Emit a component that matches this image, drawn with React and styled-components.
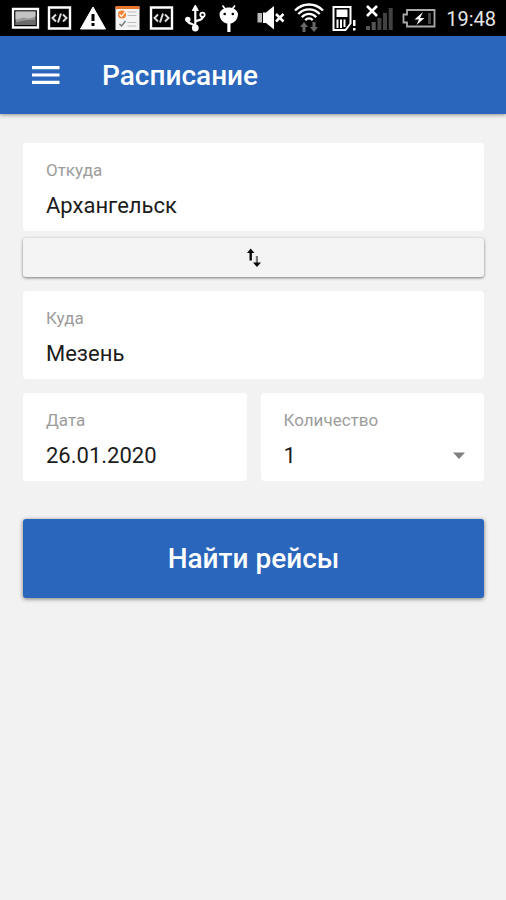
import React, { useState } from 'react';
import styled, { createGlobalStyle } from 'styled-components';

const GlobalStyle = createGlobalStyle`
  * {
    box-sizing: border-box;
  }

  body {
    margin: 0;
    background: #f2f2f2;
    font-family: Roboto, sans-serif;
  }
`;

const App = () => {
  const [from, setFrom] = useState('Архангельск');
  const [to, setTo] = useState('Мезень');
  const [date, setDate] = useState('26.01.2020');
  const [count, setCount] = useState('1');

  const swap = () => {
    setFrom(to);
    setTo(from);
  };

  return (
    <>
      <GlobalStyle />
      <StatusBar />
      <Header>
        <MenuButton type="button" aria-label="Меню">
          <svg width="28" height="20" viewBox="0 0 28 20" fill="#fff">
            <path d="M0 1h27.500v3.200H0zM0 8.400h27.500v3.200H0zM0 15.800h27.500V19H0z" />
          </svg>
        </MenuButton>
        <Title>Расписание</Title>
      </Header>
      <Form onSubmit={e => e.preventDefault()}>
        <Field>
          <Label htmlFor="from">Откуда</Label>
          <Input id="from" value={from} onChange={e => setFrom(e.target.value)} />
        </Field>
        <SwapButton type="button" aria-label="Поменять местами" onClick={swap}>
          <svg width="16" height="20" viewBox="0 0 16 20">
            <path d="M4.700 0.500L1 5h2.500v7.500h2.400V5h2.600z" fill="#0a0a0a" />
            <path d="M9.800 8h2.200v7H9.800z" fill="#777" />
            <path d="M7 14.500h8L11 19z" fill="#0a0a0a" />
          </svg>
        </SwapButton>
        <Field>
          <Label htmlFor="to">Куда</Label>
          <Input id="to" value={to} onChange={e => setTo(e.target.value)} />
        </Field>
        <Row>
          <Field>
            <Label htmlFor="date">Дата</Label>
            <Input id="date" value={date} onChange={e => setDate(e.target.value)} />
          </Field>
          <Field>
            <Label htmlFor="count">Количество</Label>
            <SelectBox>
              <Select id="count" value={count} onChange={e => setCount(e.target.value)}>
                {['1', '2', '3', '4', '5'].map(n => (
                  <option key={n}>{n}</option>
                ))}
              </Select>
              <svg width="12" height="7" viewBox="0 0 12 7" fill="#808080">
                <path d="M0 0.500h12L6 7z" />
              </svg>
            </SelectBox>
          </Field>
        </Row>
        <SubmitButton type="submit">Найти рейсы</SubmitButton>
      </Form>
    </>
  );
};

const CodeIcon = () => (
  <StatusIcon width="30" viewBox="0 0 30 36">
    <path d="M4 7.500h21v21H4z" fill="none" stroke="#fff" strokeWidth="2.400" />
    <path
      d="M11 14.500L7.500 18l3.500 3.500M18 14.500l3.500 3.500-3.500 3.500M16 13.500l-3 9"
      fill="none"
      stroke="#ddd"
      strokeWidth="2"
    />
  </StatusIcon>
);

const StatusBar = () => (
  <Status>
    <Notifications>
      <StatusIcon width="30" viewBox="0 0 30 36">
        <path d="M2 9h25v18.500H2z" fill="#000" stroke="#fff" strokeWidth="2.300" />
        <path d="M4.500 11.500h20V25h-20z" fill="#999" />
        <path d="M4.500 11.500h20v5l-7 2-5-1-8 2z" fill="#c4c4c4" />
        <path d="M4.500 22.500l8-2 12-1V25h-20z" fill="#6c6c6c" />
      </StatusIcon>
      <CodeIcon />
      <StatusIcon width="30" viewBox="0 0 30 36">
        <path d="M14 7l12.500 22h-25z" fill="#fff" stroke="#fff" strokeLinejoin="round" />
        <path d="M12.500 14h3v7h-3zM12.500 23h3v3h-3z" fill="#000" />
      </StatusIcon>
      <StatusIcon width="30" viewBox="0 0 30 36">
        <path d="M2.500 7h24v23h-24z" fill="#f4f4f4" />
        <path d="M2.500 6h24v3h-24z" fill="#e5762c" />
        <circle cx="9" cy="14.500" r="4" fill="#f58233" />
        <path d="M6.500 14.500l2 2 4-5" fill="none" stroke="#fff" strokeWidth="1.200" />
        <path d="M6.500 24l2 2 4-5" fill="none" stroke="#777" strokeWidth="1.500" />
        <path d="M14.500 12h9M14.500 15.500h9M14.500 22.500h9M14.500 26h9" stroke="#bbb" strokeWidth="1.200" />
      </StatusIcon>
      <CodeIcon />
      <StatusIcon width="30" viewBox="0 0 30 36">
        <path
          d="M14.300 8v18M14.300 26c-1-3-8-1-7.500-6M14.300 22.500c0-3 7.500-1 7.500-6"
          fill="none"
          stroke="#fff"
          strokeWidth="2.200"
        />
        <path d="M14.300 5l3 5.500h-6z" fill="#fff" stroke="#fff" strokeLinejoin="round" />
        <circle cx="14.300" cy="28" r="3.400" fill="#fff" />
        <circle cx="6.800" cy="19.500" r="2.700" fill="#fff" />
        <circle cx="21.500" cy="14.800" r="2.200" fill="#000" stroke="#fff" strokeWidth="1.800" />
      </StatusIcon>
      <StatusIcon width="30" viewBox="0 0 30 36">
        <path d="M7.500 5.500l3.500 4.500M20 5.500L16.500 10" stroke="#fff" strokeWidth="1.700" />
        <path
          d="M4.500 14c.500-4 5-6.500 9.300-6.500S22.500 10 23 14c0 5-3.500 9-7.500 9.500V32h-3.200v-8.500C8 23 4.500 19 4.500 14z"
          fill="#fff"
        />
        <circle cx="9.700" cy="14" r="1.300" fill="#000" />
        <circle cx="17.800" cy="14" r="1.300" fill="#000" />
      </StatusIcon>
    </Notifications>
    <System>
      <StatusIcon width="30" viewBox="0 0 30 36">
        <path d="M1.500 13H6v9.500H1.500z" fill="#bbb" />
        <path d="M7 12.500h3L18 6v23.500L10 23H7z" fill="#fff" />
        <path d="M20 14l7.500 7.500M27.500 14L20 21.500" stroke="#fff" strokeWidth="2.500" />
      </StatusIcon>
      <StatusIcon width="30" viewBox="0 0 30 36">
        <path
          d="M1 10.500c8-8 20-8 28 0M4.300 14c6-6.300 15.400-6.300 21.400 0M7.800 17.200c4-4.500 10.400-4.500 14.400 0M11.300 20.300c2-2.500 5.400-2.500 7.400 0"
          fill="none"
          stroke="#fff"
          strokeWidth="2.300"
        />
        <path
          d="M10 22l4 5h-2.500v5h-3v-5H6zM20 32l-4-5h2.500v-5h3v5H24z"
          fill="#686868"
        />
      </StatusIcon>
      <StatusIcon width="24" viewBox="0 0 24 36">
        <path d="M1.500 7h17v16.500L13.500 30h-12z" fill="none" stroke="#fff" strokeWidth="2" />
        <path d="M4.500 9.500h11V17h-11z" fill="#fff" />
        <path d="M5.500 19.500V28M9 19.500V28M12.500 19.500V27" stroke="#fff" strokeWidth="2" />
        <path d="M21 20h2.500v6H21zM21 28h2.500v2.500H21z" fill="#fff" />
      </StatusIcon>
      <StatusIcon width="30" viewBox="0 0 30 36">
        <path d="M2 26h4v4H2zM7.700 22h4v8h-4z" fill="#555" />
        <path d="M13.400 18h4v12h-4zM19 13h4v17h-4zM24.700 8h4v22h-4z" fill="#424242" />
        <path d="M3 6l10 10M13 6L3 16" stroke="#fff" strokeWidth="2.700" />
      </StatusIcon>
      <StatusIcon width="34" viewBox="0 0 34 36">
        <path
          d="M5 10h27.500v16.500H5v-4H1.500v-8H5z"
          fill="none"
          stroke="#aaa"
          strokeWidth="1.800"
        />
        <path d="M21 12l-8.500 7.500H17L14.500 25l8-7H18z" fill="#fff" />
        <path d="M26 13h3v11h-3z" fill="#444" />
      </StatusIcon>
      <Clock>19:48</Clock>
    </System>
  </Status>
);

const Status = styled.div`
  display: flex;
  justify-content: space-between;
  height: 36px;
  padding: 0 10px 0 11px;
  background: #000;
`;

const Notifications = styled.div`
  display: flex;
  gap: 4px;
`;

const System = styled.div`
  display: flex;
  gap: 8px;
`;

const StatusIcon = styled.svg`
  flex: none;
  height: 36px;
`;

const Clock = styled.time`
  padding-left: 2px;
  color: #e6e6e6;
  font-size: 20px;
  line-height: 38px;
`;

const Header = styled.header`
  display: flex;
  align-items: center;
  gap: 42px;
  height: 78px;
  padding: 0 32px;
  background: #2a66bc;
  box-shadow: 0 1px 4px rgba(0, 0, 0, 0.4);
`;

const MenuButton = styled.button`
  display: flex;
  padding: 0;
  border: 0;
  background: none;
`;

const Title = styled.h1`
  margin: 0;
  padding-top: 2px;
  color: #fff;
  font-size: 28px;
  font-weight: 500;
  line-height: 36px;
`;

const Form = styled.form`
  display: flex;
  flex-direction: column;
  padding: 29px 22px 29px 23px;
`;

const Field = styled.div`
  display: flex;
  flex-direction: column;
  min-width: 0;
  padding: 15px 23px 13px;
  border-radius: 4px;
  background: #fff;
`;

const Label = styled.label`
  color: #9c9c9c;
  font-size: 17px;
  line-height: 24px;
`;

const Input = styled.input`
  width: 100%;
  height: 36px;
  padding: 10px 0 0;
  border: 0;
  outline: 0;
  background: none;
  color: #1c1c1c;
  font-family: inherit;
  font-size: 22px;
`;

const SelectBox = styled.div`
  display: grid;
  align-items: center;

  > * {
    grid-area: 1 / 1;
  }

  svg {
    justify-self: end;
    margin: 10px -4px 0 0;
    pointer-events: none;
  }
`;

const Select = styled(Input).attrs({ as: 'select' })`
  appearance: none;
`;

const SwapButton = styled.button`
  display: flex;
  align-items: center;
  justify-content: center;
  height: 39px;
  margin: 7px 0 14px;
  padding: 0;
  border: 0;
  border-radius: 3px;
  background: #f4f4f4;
  box-shadow: 0 1px 3px rgba(0, 0, 0, 0.5);
`;

const Row = styled.div`
  display: grid;
  grid-template-columns: 1fr 1fr;
  gap: 14px;
  margin-top: 14px;
`;

const SubmitButton = styled.button`
  margin-top: 38px;
  padding: 20px;
  border: 0;
  border-radius: 3px;
  background: #2a66bc;
  box-shadow: 0 1px 4px rgba(0, 0, 0, 0.5);
  color: #fff;
  font-family: inherit;
  font-size: 28px;
  font-weight: 500;
  line-height: 39px;
`;

export default App;
